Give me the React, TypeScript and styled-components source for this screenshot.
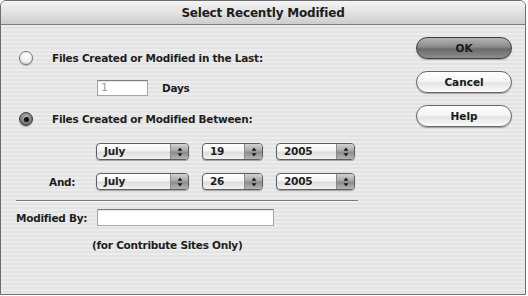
import React from "react";
import styled, { createGlobalStyle } from "styled-components";

const GlobalStyle = createGlobalStyle`
  html, body {
    margin: 0;
    padding: 0;
    background: #ffffff;
  }
  body {
    font-family: "DejaVu Sans", "Liberation Sans", sans-serif;
    color: #1e1e1e;
  }
`;

const Window = styled.div`
  box-sizing: border-box;
  width: 526px;
  height: 295px;
  display: flex;
  flex-direction: column;
  border: 1px solid #6e6e6e;
  border-radius: 6px 6px 0 0;
  overflow: hidden;
  background: repeating-linear-gradient(
    to bottom,
    #ececec 0,
    #ececec 2px,
    #e3e3e3 2px,
    #e3e3e3 4px
  );
`;

const TitleBar = styled.div`
  height: 23px;
  flex: none;
  display: flex;
  align-items: center;
  justify-content: center;
  border-bottom: 1px solid #7c7c7c;
  background: linear-gradient(to bottom, #f4f4f4 0%, #e2e2e2 50%, #cdcdcd 100%);
`;

const Title = styled.span`
  font-size: 12px;
  font-weight: bold;
  color: #1c1c1c;
  letter-spacing: -0.2px;
`;

const Body = styled.div`
  flex: 1;
  display: flex;
`;

const Form = styled.div`
  display: flex;
  flex-direction: column;
  padding-left: 15px;
  width: 350px;
`;

const Actions = styled.div`
  display: flex;
  flex-direction: column;
  gap: 12px;
  margin-left: auto;
  padding: 12px 13px 0 0;
`;

const Row = styled.div<{ $mt: number; $h: number; $pl?: number; $gap?: number }>`
  display: flex;
  align-items: center;
  height: ${(p) => p.$h}px;
  margin-top: ${(p) => p.$mt}px;
  padding-left: ${(p) => p.$pl ?? 0}px;
  gap: ${(p) => p.$gap ?? 0}px;
`;

const Label = styled.span<{ $w?: number }>`
  font-size: 10.5px;
  font-weight: bold;
  letter-spacing: -0.25px;
  white-space: nowrap;
  color: #1e1e1e;
  ${(p) => (p.$w ? `width: ${p.$w}px; flex: none;` : "")}
`;

const Radio = styled.span<{ $on?: boolean }>`
  box-sizing: border-box;
  width: 14px;
  height: 14px;
  flex: none;
  border-radius: 50%;
  border: 1px solid ${(p) => (p.$on ? "#3c3c3c" : "#7a7a7a")};
  display: flex;
  align-items: center;
  justify-content: center;
  margin-right: 19px;
  background: ${(p) =>
    p.$on
      ? "radial-gradient(circle at 50% 35%, #b8b8b8 0%, #6e6e6e 70%, #505050 100%)"
      : "radial-gradient(circle at 50% 30%, #ffffff 0%, #f0f0f0 55%, #c4c4c4 100%)"};
  box-shadow: 0 1px 1px rgba(0, 0, 0, 0.25);

  &::after {
    content: "";
    display: ${(p) => (p.$on ? "block" : "none")};
    width: 5px;
    height: 5px;
    border-radius: 50%;
    background: #111;
  }
`;

const TextField = styled.div<{ $w: number; $h: number; $muted?: boolean }>`
  box-sizing: border-box;
  width: ${(p) => p.$w}px;
  height: ${(p) => p.$h}px;
  flex: none;
  background: #ffffff;
  border: 1px solid #a6a6a6;
  border-top-color: #7e7e7e;
  box-shadow: inset 0 1px 1px rgba(0, 0, 0, 0.12);
  font-size: 11px;
  line-height: ${(p) => p.$h - 2}px;
  padding-left: 3px;
  color: ${(p) => (p.$muted ? "#9c9c9c" : "#222")};
`;

const SelectBox = styled.div<{ $w: number }>`
  box-sizing: border-box;
  width: ${(p) => p.$w}px;
  height: 17px;
  flex: none;
  display: flex;
  border: 1px solid #5e5e5e;
  border-radius: 4px;
  overflow: hidden;
  background: linear-gradient(to bottom, #ffffff 0%, #f4f4f4 45%, #dedede 55%, #f2f2f2 100%);
  box-shadow: 0 1px 1px rgba(0, 0, 0, 0.3);
`;

const SelectValue = styled.span`
  flex: 1;
  font-size: 10.5px;
  font-weight: bold;
  letter-spacing: -0.2px;
  line-height: 15px;
  padding-left: 7px;
  color: #1e1e1e;
`;

const Stepper = styled.span`
  width: 17px;
  flex: none;
  display: flex;
  align-items: center;
  justify-content: center;
  border-left: 1px solid #8a8a8a;
  background: linear-gradient(to bottom, #d2d2d2 0%, #a8a8a8 45%, #8c8c8c 55%, #b4b4b4 100%);
`;

const Separator = styled.div`
  width: 342px;
  height: 0;
  margin-top: 10px;
  border-top: 1px solid #7a7a7a;
  border-bottom: 1px solid #f6f6f6;
`;

const PushButton = styled.div<{ $primary?: boolean }>`
  box-sizing: border-box;
  width: 96px;
  height: 22px;
  border-radius: 11px;
  display: flex;
  align-items: center;
  justify-content: center;
  font-size: 10.5px;
  font-weight: bold;
  color: #1a1a1a;
  border: 1px solid ${(p) => (p.$primary ? "#3e3e3e" : "#666")};
  background: ${(p) =>
    p.$primary
      ? "linear-gradient(to bottom, #b4b4b4 0%, #8a8a8a 45%, #6a6a6a 55%, #8e8e8e 100%)"
      : "linear-gradient(to bottom, #ffffff 0%, #f6f6f6 45%, #e4e4e4 55%, #fbfbfb 100%)"};
  box-shadow: 0 1px 1px rgba(0, 0, 0, 0.3);
`;

const Note = styled.span`
  font-size: 10.5px;
  font-weight: bold;
  letter-spacing: -0.25px;
  color: #1e1e1e;
`;

function Arrows() {
  return (
    <svg width="6" height="10" viewBox="0 0 6 10">
      <path d="M3 0.5 L5.5 3.8 L0.5 3.8 Z" fill="#1a1a1a" />
      <path d="M0.5 6.2 L5.5 6.2 L3 9.5 Z" fill="#1a1a1a" />
    </svg>
  );
}

function Select({ value, width }: { value: string; width: number }) {
  return (
    <SelectBox $w={width}>
      <SelectValue>{value}</SelectValue>
      <Stepper>
        <Arrows />
      </Stepper>
    </SelectBox>
  );
}

function DateRow({ month, day, year }: { month: string; day: string; year: string }) {
  return (
    <>
      <Select value={month} width={93} />
      <Select value={day} width={61} />
      <Select value={year} width={79} />
    </>
  );
}

export default function App() {
  return (
    <>
      <GlobalStyle />
      <Window>
        <TitleBar>
          <Title>Select Recently Modified</Title>
        </TitleBar>
        <Body>
          <Form>
            <Row $mt={24} $h={18} $pl={3}>
              <Radio />
              <Label>Files Created or Modified in the Last:</Label>
            </Row>
            <Row $mt={13} $h={16} $pl={81} $gap={14}>
              <TextField $w={51} $h={16} $muted>
                1
              </TextField>
              <Label>Days</Label>
            </Row>
            <Row $mt={14} $h={18} $pl={3}>
              <Radio $on />
              <Label>Files Created or Modified Between:</Label>
            </Row>
            <Row $mt={15} $h={17} $pl={80} $gap={13}>
              <DateRow month="July" day="19" year="2005" />
            </Row>
            <Row $mt={13} $h={17} $pl={33} $gap={13}>
              <Label $w={34}>And:</Label>
              <DateRow month="July" day="26" year="2005" />
            </Row>
            <Separator />
            <Row $mt={7} $h={17}>
              <Label $w={81}>Modified By:</Label>
              <TextField $w={177} $h={17} />
            </Row>
            <Row $mt={12} $h={14} $pl={76}>
              <Note>(for Contribute Sites Only)</Note>
            </Row>
          </Form>
          <Actions>
            <PushButton $primary>OK</PushButton>
            <PushButton>Cancel</PushButton>
            <PushButton>Help</PushButton>
          </Actions>
        </Body>
      </Window>
    </>
  );
}
